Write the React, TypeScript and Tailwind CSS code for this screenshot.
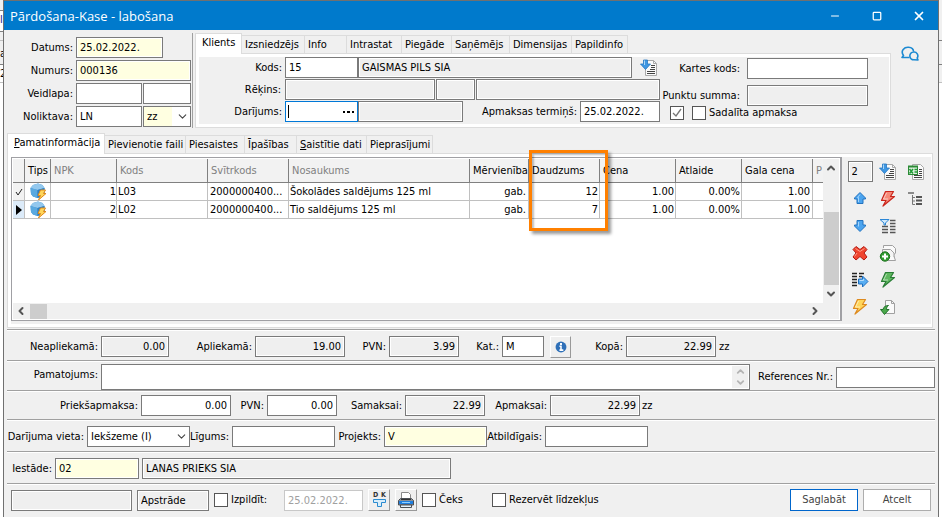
import React from 'react';
import clsx from 'clsx';
import { ChevronDown, ChevronLeft, ChevronRight, ChevronUp, Minus, Square, X } from 'lucide-react';

/* ---------- Icons ---------- */

const Svg = ({ children, size = 18 }: { children: React.ReactNode; size?: number }) => (
  <svg width={size} height={size} viewBox="0 0 18 18" fill="none" aria-hidden="true">
    {children}
  </svg>
);

const DocDownIcon = () => (
  <Svg>
    <path d="M5.500 1.500h8l3 3v12h-11z" fill="#fafafa" stroke="#a8a8a8" />
    <path d="M13.500 1.500v3h3" stroke="#a8a8a8" />
    <path d="M11 6.500h4M11 8.500h4M10 10.500h5M7 12.500h8M7 14.500h8" stroke="#444" />
    <path d="M3.500 1h4v4h3L5.500 10.500.5 5h3z" fill="#3f97e2" stroke="#2477c2" strokeWidth=".8" />
    <path d="M4.500 1.500v4.500" stroke="#a9d6f8" />
  </Svg>
);

const ExcelIcon = () => (
  <Svg>
    <path d="M5.500 1.500h8l3 3v12h-11z" fill="#fafafa" stroke="#a8a8a8" />
    <path d="M12 6.500h3M12 8.500h3M12 10.500h3M7 12.500h8M7 14.500h8" stroke="#444" />
    <rect x="1.500" y="3.500" width="9" height="8" fill="#dff0df" stroke="#2b8a35" />
    <path d="M1 3.500h10" stroke="#2b8a35" strokeWidth="2" />
    <path d="M2.500 6 6 10.500M6 6l-3.500 4.500M7.500 6.500H10M7.500 9H10" stroke="#1f9a35" strokeWidth="1.500" />
  </Svg>
);

const TreeIcon = () => (
  <Svg>
    <path d="M1 3h6" stroke="#8a8a8a" strokeWidth="2" />
    <path d="M5.500 5v9.500H8M5.500 7.500H8M5.500 11H8" stroke="#777" />
    <path d="M9 7h6M9 10.500h6M9 14h6" stroke="#555" strokeWidth="2" />
  </Svg>
);

const ArrowUpIcon = () => (
  <Svg>
    <path d="M9 2.500 14.500 8v1H12v4.500H6V9H3.500V8z" fill="#4ba4ef" stroke="#2373bf" strokeLinejoin="round" />
    <path d="M9 4.500 6.500 7.500h1V12" stroke="#a4d4fb" />
  </Svg>
);

const ArrowDownIcon = () => (
  <Svg>
    <path d="M9 14.500 14.500 9V8H12V3.500H6V8H3.500v1z" fill="#4ba4ef" stroke="#2373bf" strokeLinejoin="round" />
    <path d="M7.500 5v4.500" stroke="#a4d4fb" />
  </Svg>
);

const BoltIcon = ({ fill, stroke }: { fill: string; stroke: string }) => (
  <Svg>
    <path
      d="M6.500 1.500h8L11.500 6.500H15.500L4 16l3-5.500H2.500z"
      fill={fill}
      stroke={stroke}
      strokeWidth="1.200"
      strokeLinejoin="round"
    />
    <path d="M7.500 3 4.500 9H9" stroke="#fff" strokeOpacity=".55" />
  </Svg>
);

const FilterListIcon = () => (
  <Svg>
    <path d="M1 2.500h9L6.500 6v2L5 8V6z" fill="#cfe8fb" stroke="#2b86d6" />
    <path
      d="M11 3.500h5.500M11 6.500h5.500M11 9.500h5.500M11 12.500h5.500M11 15.500h5.500M3 9.500h6M3 12.500h6M3 15.500h6"
      stroke="#555"
      strokeWidth="1.400"
    />
  </Svg>
);

const DeleteIcon = () => (
  <Svg>
    <path
      d="m5 2.500 4 3 4-3 3 3L13 9l3 4-3 3-4-3.500L5 16l-3-3 3-4-3-3.500z"
      fill="#f0452f"
      stroke="#b51a12"
      strokeLinejoin="round"
    />
    <path d="m4.500 4.500 4.500 3 4.500-3M6 9l-2.500 3.500" stroke="#ff9d88" />
  </Svg>
);

const AddDocsIcon = () => (
  <Svg>
    <path d="M4.500 4V1.500h9l3 3V9l-2 2 2 5.500H9" fill="#fafafa" stroke="#a0a0a0" />
    <path d="M3.500 9V5.500h8L15 9v4" fill="#f4f4f4" stroke="#a0a0a0" />
    <circle cx="6" cy="12.500" r="4.700" fill="#2f9a2f" stroke="#1c711c" />
    <path d="M6 9.500v6M3 12.500h6" stroke="#fff" strokeWidth="2" />
  </Svg>
);

const ListArrowIcon = () => (
  <Svg>
    <path d="M1 2.500h5M1 5.500h5M1 8.500h5M1 11.500h5M1 14.500h5M8 2.500h5M8 5.500h3" stroke="#222" strokeWidth="1.400" />
    <path d="M7.500 8h4V5l5.500 5.500-5.500 5.500v-3h-4z" fill="#5aaef2" stroke="#1d6fc0" strokeLinejoin="round" />
    <path d="M8.500 9.500h4V8" stroke="#b6dcfb" />
  </Svg>
);

const DocBackIcon = () => (
  <Svg>
    <path d="M6.500 2.500h6l3 3v10h-9z" fill="#fafafa" stroke="#a0a0a0" />
    <path d="M12.500 2.500v3h3" stroke="#a0a0a0" />
    <path
      d="M9.500 7.500C7 7.500 4.500 8.500 4 11.500H1.500l4 5 4.500-5H7.500c0-2 .5-3 2-4z"
      fill="#4aa84a"
      stroke="#22722b"
      strokeLinejoin="round"
    />
  </Svg>
);

const ProductIcon = () => (
  <Svg>
    <path d="M1.500 5 4 2 9 .500 13.500 2 15.500 5v6L13 13.500l-4.500 1.500L4 13.500 2 11z" fill="#3f94d3" />
    <path d="M1.500 5 4 2 9 .500 13.500 2l2 3-7 2z" fill="#93c8ee" />
    <path d="M8.500 7v8L4 13.500 2 11l-.5-6z" fill="#5aa9e0" />
    <path d="M8.500 7l7-2v6L13 13.500 8.500 15z" fill="#2f7ec0" />
    <path d="M11.500 7h5l-2 3.500h2.500l-7.500 6.500 2-4.500H9z" fill="#ffd65a" stroke="#e08a1c" strokeLinejoin="round" />
  </Svg>
);

const InfoIcon = () => (
  <Svg size={14}>
    <circle cx="9" cy="9" r="7" fill="#2f70b8" />
    <path d="M9 4v2.500" stroke="#fff" strokeWidth="2.500" />
    <path d="M7 8h2v5M7 13h5" stroke="#fff" strokeWidth="2" />
  </Svg>
);

const DebitCreditIcon = () => (
  <Svg>
    <text x="3" y="6" fontSize="7" fontWeight="bold" fill="#333">D</text>
    <text x="11" y="6" fontSize="7" fontWeight="bold" fill="#333">K</text>
    <path d="M3.500 8.500h12v3h-4v4h-4v-4h-4z" fill="#d9eefb" stroke="#2a8bd0" />
  </Svg>
);

const PrinterIcon = () => (
  <Svg>
    <path d="M4.500 8V1.500h7l2 2V8" fill="#fff" stroke="#888" />
    <path d="M3.500 7.500h11l2 2v4.500h-15V9.500z" fill="#8b9097" stroke="#4a4f55" />
    <path d="M4 8.500h10" stroke="#333" />
    <path d="M2 11.500h14" stroke="#1f7fe0" strokeWidth="3" />
    <path d="M5 11.500h8" stroke="#8fd0ff" />
    <path d="M3.500 14h11v2.500h-11z" fill="#e7f3fc" stroke="#4a4f55" />
  </Svg>
);

const ChatIcon = () => (
  <Svg>
    <path
      d="M8.500 12.500H1l1.500-2C-1 5.500 3.500 2 7.500 2.300c3 .2 5 2.200 5 4.500"
      stroke="#1d8ad2"
      strokeWidth="1.600"
      strokeLinejoin="round"
    />
    <path
      d="M12.500 7a3.900 3.900 0 1 0 .5 7.800l4 .2-.8-2A3.900 3.900 0 0 0 12.500 7z"
      stroke="#1d8ad2"
      strokeWidth="1.600"
      strokeLinejoin="round"
    />
  </Svg>
);

/* ---------- Form parts ---------- */

interface TextBoxProps extends React.InputHTMLAttributes<HTMLInputElement> {
  tone?: 'white' | 'grey' | 'yellow';
}

const tones = {
  white: 'bg-white',
  grey: 'bg-[#efefef]',
  yellow: 'bg-[#ffffe1]',
};

const TextBox = ({ tone = 'white', className, ...rest }: TextBoxProps) => (
  <input
    type="text"
    readOnly={tone === 'grey'}
    className={clsx(
      'h-[21px] min-w-0 border px-[3px] shadow-[inset_0_0_0_1px_#fff] outline-none',
      !className?.includes('border-[') && 'border-[#7a7a7a]',
      tones[tone],
      className
    )}
    {...rest}
  />
);

const Label = ({ id, text, className }: { id: string; text: string; className?: string }) => (
  <label htmlFor={id} className={clsx('shrink-0 pr-[3px] text-right whitespace-nowrap', className)}>
    {text}
  </label>
);

const CheckBox = ({ id, label, checked, className }: { id: string; label?: string; checked?: boolean; className?: string }) => (
  <span className={clsx('flex shrink-0 items-center', className)}>
    <span className="relative flex">
      <input
        id={id}
        type="checkbox"
        defaultChecked={checked}
        aria-label={label ? undefined : 'Apmaksāts'}
        className="peer h-[14px] w-[14px] appearance-none border border-[#555] bg-white"
      />
      <svg
        viewBox="0 0 14 14"
        className="pointer-events-none absolute inset-0 hidden h-[14px] w-[14px] peer-checked:block"
        fill="none"
        aria-hidden="true"
      >
        <path d="m3 7 3 3 5-7" stroke="#777" strokeWidth="1.300" />
      </svg>
    </span>
    {label && (
      <label htmlFor={id} className="pl-[3px] whitespace-nowrap">
        {label}
      </label>
    )}
  </span>
);

const Select = ({ value, label, id, className }: { value: string; label?: string; id: string; className: string }) => (
  <span className="relative flex shrink-0">
    <select
      id={id}
      aria-label={label}
      className={clsx('h-[21px] appearance-none border border-[#7a7a7a] px-[3px] outline-none', className)}
    >
      <option>{value}</option>
    </select>
    <ChevronDown className="pointer-events-none absolute top-1 right-[2px] h-[13px] w-[13px] text-[#444]" strokeWidth={2} />
  </span>
);

const FormRow = ({ children, className }: { children: React.ReactNode; className?: string }) => (
  <div className={clsx('mx-[3px] flex items-center border-t border-[#a0a0a0] shadow-[inset_0_1px_0_#fff]', className)}>
    {children}
  </div>
);

interface TabItem {
  text: string;
  width: string;
  hotkey?: boolean;
}

const TabStrip = ({ tabs }: { tabs: TabItem[] }) => (
  <div role="tablist" className="flex items-end">
    {tabs.map((tab, idx) => (
      <button
        key={tab.text}
        role="tab"
        aria-selected={idx === 0}
        className={clsx(
          'relative shrink-0 border-t border-r border-[#dcdcdc] text-left whitespace-nowrap',
          tab.width,
          idx === 0 ? 'z-10 -mb-px h-[21px] border-l bg-white pb-[2px] pl-[6px]' : 'h-[18px] bg-[#f0f0f0] pl-[3px]'
        )}
      >
        {tab.hotkey ? (
          <>
            <u>{tab.text[0]}</u>
            {tab.text.slice(1)}
          </>
        ) : (
          tab.text
        )}
      </button>
    ))}
  </div>
);

const partnerTabs: TabItem[] = [
  { text: 'Klients', width: 'w-[47px]' },
  { text: 'Izsniedzējs', width: 'w-[63px]' },
  { text: 'Info', width: 'w-[42px]' },
  { text: 'Intrastat', width: 'w-[55px]' },
  { text: 'Piegāde', width: 'w-[50px]' },
  { text: 'Saņēmējs', width: 'w-[58px]' },
  { text: 'Dimensijas', width: 'w-[62px]' },
  { text: 'Papildinfo', width: 'w-[56px]' },
];

const detailTabs: TabItem[] = [
  { text: 'Pamatinformācija', width: 'w-[98px]', hotkey: true },
  { text: 'Pievienotie faili', width: 'w-[81px]' },
  { text: 'Piesaistes', width: 'w-[59px]' },
  { text: 'Īpašības', width: 'w-[52px]' },
  { text: 'Saistītie dati', width: 'w-[70px]', hotkey: true },
  { text: 'Pieprasījumi', width: 'w-[66px]' },
];

/* ---------- Sections ---------- */

const TitleBar = () => (
  <header className="flex h-[29px] items-center gap-1 bg-[#007acc] pl-[6px] text-white">
    <h1 className="flex-1 font-['Open_Sans','Noto_Sans',sans-serif] text-[13px]">Pārdošana-Kase - labošana</h1>
    <button aria-label="Minimizēt" className="flex w-[38px] justify-center">
      <Minus size={12} strokeWidth={2} />
    </button>
    <button aria-label="Maksimizēt" className="flex w-[38px] justify-center">
      <Square size={10} strokeWidth={3} />
    </button>
    <button aria-label="Aizvērt" className="flex w-[38px] justify-center">
      <X size={14} strokeWidth={3} />
    </button>
  </header>
);

const DocumentFields = () => (
  <div className="mt-1 flex w-[187px] shrink-0 flex-col gap-[2px]">
    <div className="flex items-center">
      <Label id="datums" text="Datums:" className="w-[72px]" />
      <TextBox id="datums" tone="yellow" className="w-[87px]" defaultValue="25.02.2022." />
    </div>
    <div className="flex items-center">
      <Label id="numurs" text="Numurs:" className="w-[72px]" />
      <TextBox id="numurs" tone="yellow" className="flex-1" defaultValue="000136" />
    </div>
    <div className="flex items-center">
      <Label id="veidlapa" text="Veidlapa:" className="w-[72px]" />
      <TextBox id="veidlapa" className="mr-px w-[66px]" />
      <TextBox aria-label="Veidlapas sērija" className="flex-1" />
    </div>
    <div className="flex items-center">
      <Label id="noliktava" text="Noliktava:" className="w-[72px]" />
      <TextBox id="noliktava" className="mr-px w-[66px]" defaultValue="LN" />
      <Select
        id="valuta"
        label="Valūta"
        value="zz"
        className="w-12 bg-[linear-gradient(to_right,#ffffe1_28px,#fff_28px)]"
      />
    </div>
  </div>
);

const PartnerPanel = () => (
  <div className="ml-[2px] min-w-0 flex-1">
    <TabStrip tabs={partnerTabs} />
    <div className="border border-[#dcdcdc] bg-white p-[3px] pr-px">
      <div className="flex bg-[#f0f0f0] pb-[2px]">
        <div className="flex min-w-0 flex-1 flex-col gap-px">
          <div className="flex items-center">
            <Label id="kods" text="Kods:" className="w-[86px]" />
            <TextBox id="kods" className="w-[73px]" defaultValue="15" />
            <TextBox aria-label="Klienta nosaukums" tone="grey" className="flex-1" defaultValue="GAISMAS PILS SIA" />
            <button aria-label="Ielādēt klientu" className="w-7 pl-2">
              <DocDownIcon />
            </button>
          </div>
          <div className="flex items-center gap-px">
            <Label id="rekins" text="Rēķins:" className="w-[85px]" />
            <TextBox id="rekins" tone="grey" className="w-[150px]" />
            <TextBox aria-label="Rēķina valūta" tone="grey" className="w-[39px]" />
            <TextBox aria-label="Rēķina banka" tone="grey" className="flex-1" />
          </div>
          <div className="flex items-center">
            <Label id="darijums" text="Darījums:" className="w-[86px]" />
            <span className="relative flex">
              <TextBox id="darijums" className="w-[73px] border-[#0078d7]" />
              <span className="pointer-events-none absolute top-1 left-[3px] h-[13px] w-px bg-black" />
              <button aria-label="Izvēlēties darījumu" className="absolute top-0 right-1 h-[21px]">
                <svg width="11" height="2" aria-hidden="true">
                  <path d="M0 0h2v2H0zM4 0h3v2H4zM9 0h2v2H9z" fill="#000" />
                </svg>
              </button>
            </span>
            <TextBox aria-label="Darījuma nosaukums" tone="grey" className="w-[105px]" />
            <Label id="termins" text="Apmaksas termiņš:" className="flex-1" />
            <TextBox id="termins" className="w-20" defaultValue="25.02.2022." />
          </div>
        </div>
        <div className="w-[229px] shrink-0 pt-px">
          <div className="flex items-center">
            <Label id="karte" text="Kartes kods:" className="mr-1 w-[83px]" />
            <TextBox id="karte" className="w-[121px]" />
          </div>
          <div className="mt-[6px] flex items-center">
            <Label id="punkti" text="Punktu summa:" className="mr-1 w-[83px]" />
            <TextBox id="punkti" tone="grey" className="w-[121px]" />
          </div>
          <div className="flex pl-[10px]">
            <CheckBox id="apmaksats" checked className="mr-2" />
            <CheckBox id="sadalita" label="Sadalīta apmaksa" />
          </div>
        </div>
      </div>
    </div>
  </div>
);

const columns = [
  { title: '', width: 'w-[12px]', dim: false },
  { title: 'Tips', width: 'w-[26px]', dim: false },
  { title: 'NPK', width: 'w-[66px]', dim: true },
  { title: 'Kods', width: 'w-[91px]', dim: true },
  { title: 'Svītrkods', width: 'w-[81px]', dim: true },
  { title: 'Nosaukums', width: 'w-[181px]', dim: true },
  { title: 'Mērvienība', width: 'w-[59px]', dim: false },
  { title: 'Daudzums', width: 'w-[71px]', dim: false },
  { title: 'Cena', width: 'w-[76px]', dim: false },
  { title: 'Atlaide', width: 'w-[66px]', dim: false },
  { title: 'Gala cena', width: 'w-[71px]', dim: false },
  { title: 'P', width: 'w-auto', dim: true },
];

const items = [
  { npk: 1, kods: 'L03', svitrkods: '2000000400...', nosaukums: 'Šokolādes saldējums 125 ml', mervieniba: 'gab.', daudzums: 12, cena: '1.00', atlaide: '0.00%', gala: '1.00' },
  { npk: 2, kods: 'L02', svitrkods: '2000000400...', nosaukums: 'Tio saldējums 125 ml', mervieniba: 'gab.', daudzums: 7, cena: '1.00', atlaide: '0.00%', gala: '1.00' },
];

const ItemGrid = () => (
  <div className="relative mb-[3px] flex min-w-0 flex-1 flex-col border border-r-2 border-[#a0a0a4] bg-white p-px">
    <div className="flex h-36">
      <div className="min-w-0 flex-1 overflow-hidden">
        <table className="w-full table-fixed border-separate border-spacing-0">
          <thead>
            <tr className="h-6 bg-[#f2f2f2]">
              {columns.map((col, idx) => (
                <th
                  key={idx}
                  className={clsx(
                    'overflow-hidden border-b border-[#808080] p-0 text-left font-normal whitespace-nowrap',
                    col.width,
                    idx < columns.length - 1 && 'border-r',
                    idx >= 1 && 'pl-[3px]',
                    col.dim && 'text-[#808080]'
                  )}
                >
                  {col.title}
                </th>
              ))}
            </tr>
          </thead>
          <tbody className="[&_td]:overflow-hidden [&_td]:border-r [&_td]:border-b [&_td]:border-[#c0c0c0] [&_td]:p-0 [&_td]:whitespace-nowrap [&_td:last-child]:border-r-0">
            {items.map((item, idx) => (
              <tr key={item.npk} className="h-[18px]">
                <td className={clsx(idx === 1 ? 'bg-[#dcebf9]' : 'bg-[#f2f2f2]')}>
                  <svg width="10" height="12" viewBox="0 0 10 12" className="mx-auto" fill="none" aria-hidden="true">
                    {idx === 1 ? <path d="M2 1v10l6-5z" fill="#000" /> : <path d="m2 6 2 3 4-6" stroke="#222" />}
                  </svg>
                </td>
                <td>
                  <span className="flex h-[17px] items-center justify-center">
                    <ProductIcon />
                  </span>
                </td>
                <td className="text-right">{item.npk}</td>
                <td><span className="pl-px">{item.kods}</span></td>
                <td><span className="pl-[2px]">{item.svitrkods}</span></td>
                <td><span className="pl-px">{item.nosaukums}</span></td>
                <td className="text-right"><span className="pr-[2px]">{item.mervieniba}</span></td>
                <td className="text-right"><span className="pr-px">{item.daudzums}</span></td>
                <td className="text-right"><span className="pr-px">{item.cena}</span></td>
                <td className="text-right"><span className="pr-px">{item.atlaide}</span></td>
                <td className="text-right"><span className="pr-[2px]">{item.gala}</span></td>
                <td />
              </tr>
            ))}
          </tbody>
        </table>
      </div>
      <div className="flex w-4 shrink-0 flex-col items-center bg-[#f0f0f0]">
        <ChevronUp size={12} strokeWidth={4} className="my-[3px] text-[#555]" />
        <div className="mt-[35px] h-[73px] w-[15px] bg-[#cdcdcd]" />
        <ChevronDown size={12} strokeWidth={4} className="mt-[3px] text-[#555]" />
      </div>
    </div>
    <div className="flex h-4 items-center bg-[#f0f0f0] pr-[18px]">
      <ChevronLeft size={12} strokeWidth={4} className="mr-[3px] ml-[2px] text-[#555]" />
      <div className="h-[15px] w-[17px] bg-[#cdcdcd]" />
      <ChevronRight size={12} strokeWidth={4} className="ml-auto text-[#555]" />
    </div>
    {/* quantity column highlight */}
    <div className="pointer-events-none absolute -top-2 left-[517px] h-[81px] w-[79px] border-[3px] border-[#ff8000] shadow-[3px_3px_3px_rgba(0,0,0,0.4),inset_2px_2px_2px_rgba(0,0,0,0.25)]" />
  </div>
);

const tools = [
  { label: 'Pievienot no dokumenta', icon: <DocDownIcon /> },
  { label: 'Excel', icon: <ExcelIcon /> },
  { label: 'Pārvietot augšup', icon: <ArrowUpIcon /> },
  { label: 'Sarkanā darbība', icon: <BoltIcon fill="#f78a78" stroke="#c9251c" /> },
  { label: 'Koks', icon: <TreeIcon /> },
  { label: 'Pārvietot lejup', icon: <ArrowDownIcon /> },
  { label: 'Filtrs', icon: <FilterListIcon /> },
  null,
  { label: 'Dzēst', icon: <DeleteIcon /> },
  { label: 'Pievienot', icon: <AddDocsIcon /> },
  null,
  { label: 'Pārnest', icon: <ListArrowIcon /> },
  { label: 'Zaļā darbība', icon: <BoltIcon fill="#5fb85f" stroke="#2a7d36" /> },
  null,
  { label: 'Dzeltenā darbība', icon: <BoltIcon fill="#ffd65a" stroke="#dd8a1f" /> },
  { label: 'Atgriezt', icon: <DocBackIcon /> },
];

const ToolPanel = () => (
  <div className="grid w-[89px] shrink-0 auto-rows-[27px] grid-cols-[28px_28px_28px] place-items-center content-start pt-px pl-1">
    <TextBox aria-label="Rindu skaits" tone="grey" className="w-[25px]" defaultValue="2" />
    {tools.map((tool, idx) =>
      tool ? (
        <button key={idx} aria-label={tool.label} className="flex">
          {tool.icon}
        </button>
      ) : (
        <span key={idx} />
      )
    )}
  </div>
);

const toolButton =
  'flex h-[22px] items-center justify-center border border-t-white border-l-white border-r-[#999] border-b-[#999] bg-[#efefef]';

const Footer = () => (
  <>
    <FormRow className="mt-px h-[31px] pt-[3px]">
      <Label id="neapliekama" text="Neapliekamā:" className="w-[94px]" />
      <TextBox id="neapliekama" tone="grey" className="w-[68px] text-right" defaultValue="0.00" />
      <Label id="apliekama" text="Apliekamā:" className="w-[86px]" />
      <TextBox id="apliekama" tone="grey" className="w-[90px] text-right" defaultValue="19.00" />
      <Label id="pvn" text="PVN:" className="w-11" />
      <TextBox id="pvn" tone="grey" className="w-[70px] text-right" defaultValue="3.99" />
      <Label id="kat" text="Kat.:" className="w-[43px]" />
      <TextBox id="kat" className="mr-[6px] w-[42px]" defaultValue="M" />
      <button aria-label="Informācija" className={clsx(toolButton, 'w-[21px]')}>
        <InfoIcon />
      </button>
      <Label id="kopa" text="Kopā:" className="w-[55px]" />
      <TextBox id="kopa" tone="grey" className="mr-[3px] w-[90px] text-right" defaultValue="22.99" />
      <span>zz</span>
    </FormRow>
    <FormRow className="pt-[3px]">
      <Label id="pamatojums" text="Pamatojums:" className="w-[94px] pb-1" />
      <span className="relative flex min-w-0 flex-1">
        <textarea
          id="pamatojums"
          rows={1}
          className="h-[26px] w-full resize-none overflow-hidden border border-[#7a7a7a] bg-white px-[3px] py-1 outline-none"
        />
        <span className="absolute inset-y-[2px] right-[2px] flex w-4 flex-col items-center justify-center bg-[#f0f0f0] text-[#b4b4b4]">
          <ChevronUp size={11} strokeWidth={4} />
          <ChevronDown size={11} strokeWidth={4} />
        </span>
      </span>
      <Label id="reference" text="References Nr.:" className="w-[86px]" />
      <TextBox id="reference" className="w-[99px]" />
    </FormRow>
    <FormRow className="pt-1 pb-[3px]">
      <Label id="prieksapmaksa" text="Priekšapmaksa:" className="w-[134px]" />
      <TextBox id="prieksapmaksa" className="w-[90px] text-right" defaultValue="0.00" />
      <Label id="pvn2" text="PVN:" className="w-9" />
      <TextBox id="pvn2" className="w-[70px] text-right" defaultValue="0.00" />
      <Label id="samaksai" text="Samaksai:" className="w-[68px]" />
      <TextBox id="samaksai" tone="grey" className="w-20 text-right" defaultValue="22.99" />
      <Label id="apmaksai" text="Apmaksai:" className="w-[65px]" />
      <TextBox id="apmaksai" tone="grey" className="mr-[2px] w-[90px] text-right" defaultValue="22.99" />
      <span>zz</span>
    </FormRow>
    <FormRow className="pt-[6px] pb-1">
      <Label id="vieta" text="Darījuma vieta:" className="w-20" />
      <Select id="vieta" value="Iekšzeme (I)" className="w-[103px] bg-white" />
      <Label id="ligums" text="Līgums:" className="w-[42px]" />
      <TextBox id="ligums" className="w-[103px]" />
      <Label id="projekts" text="Projekts:" className="w-[49px]" />
      <TextBox id="projekts" tone="yellow" className="w-[103px]" defaultValue="V" />
      <Label id="atbildigais" text="Atbildīgais:" className="w-[58px]" />
      <TextBox id="atbildigais" className="w-[103px]" />
    </FormRow>
    <FormRow className="pt-[6px] pb-1">
      <Label id="iestade" text="Iestāde:" className="w-12" />
      <TextBox id="iestade" tone="yellow" className="mr-[3px] w-[84px]" defaultValue="02" />
      <TextBox aria-label="Iestādes nosaukums" tone="grey" className="w-[309px]" defaultValue="LANAS PRIEKS SIA" />
    </FormRow>
    <FormRow className="pt-[5px] pl-1">
      <TextBox aria-label="Statuss" tone="grey" className="mr-[5px] w-[121px]" />
      <TextBox aria-label="Stāvoklis" tone="grey" className="mr-[5px] w-[72px]" defaultValue="Apstrāde" />
      <CheckBox id="izpildit" label="Izpildīt:" className="w-[70px]" />
      <TextBox
        aria-label="Izpildes datums"
        disabled
        className="mr-[5px] w-[79px] border-[#c8c8c8] text-[#a0a0a0]"
        defaultValue="25.02.2022."
      />
      <button aria-label="Kontējums" className={clsx(toolButton, 'mr-[5px] w-[22px]')}>
        <DebitCreditIcon />
      </button>
      <button aria-label="Drukāt" className={clsx(toolButton, 'mr-[5px] w-[22px]')}>
        <PrinterIcon />
      </button>
      <CheckBox id="ceks" label="Čeks" className="w-[70px]" />
      <CheckBox id="rezervet" label="Rezervēt līdzekļus" />
      <button className="ml-auto h-[22px] w-[68px] border border-[#0066cc] bg-white text-[#444]">Saglabāt</button>
      <button className="mr-1 ml-[5px] h-[22px] w-[68px] border border-[#adadad] bg-white text-[#444]">Atcelt</button>
    </FormRow>
  </>
);

export default function App() {
  return (
    <div className="flex min-h-screen bg-[#f0f0f0] font-['DejaVu_Sans_Condensed','Noto_Sans',sans-serif] text-[11px] leading-[14px] text-black">
      {/* slivers of the list window behind the dialog */}
      <div className="flex w-[3px] shrink-0 flex-col overflow-hidden bg-white">
        <div className="h-[11px] border-b border-[#808080] bg-[#f0f0f0]" />
        <div className="h-[21px] border-b border-[#808080] pt-[2px] text-[#1a1a8c]">l</div>
        <div className="h-[9px] border-b border-[#c0c0c0] bg-[#f0f0f0]" />
        <div className="h-6 border-b border-[#808080] bg-[#f0f0f0] pt-[6px]">a</div>
        <div className="h-[18px] border-b border-[#c0c0c0] pt-[2px]">2</div>
      </div>
      <main className="flex min-w-0 flex-1 flex-col border-x border-t border-[#707070] bg-[#f0f0f0]">
        <TitleBar />
        <section className="flex items-start pt-[3px] pb-[5px]">
          <DocumentFields />
          <div className="ml-px w-px self-stretch bg-[#a0a0a0]" />
          <PartnerPanel />
          <button aria-label="Palīdzība" className="mt-3 flex w-[47px] shrink-0 pl-[10px]">
            <ChatIcon />
          </button>
        </section>
        <section className="mr-[5px] ml-[3px]">
          <TabStrip tabs={detailTabs} />
          <div className="border border-[#dcdcdc] bg-white p-[3px] pr-px">
            <div className="flex bg-[#f0f0f0]">
              <ItemGrid />
              <ToolPanel />
            </div>
          </div>
        </section>
        <Footer />
      </main>
      <div className="flex w-[3px] shrink-0 flex-col bg-white">
        <div className="h-[41px] border-b border-[#808080] bg-[#f0f0f0]" />
        <div className="h-6 border-b border-[#808080] bg-[#f0f0f0]" />
        <div className="h-[18px] border-b border-[#c0c0c0] bg-[#f0f0f0]" />
      </div>
    </div>
  );
}
